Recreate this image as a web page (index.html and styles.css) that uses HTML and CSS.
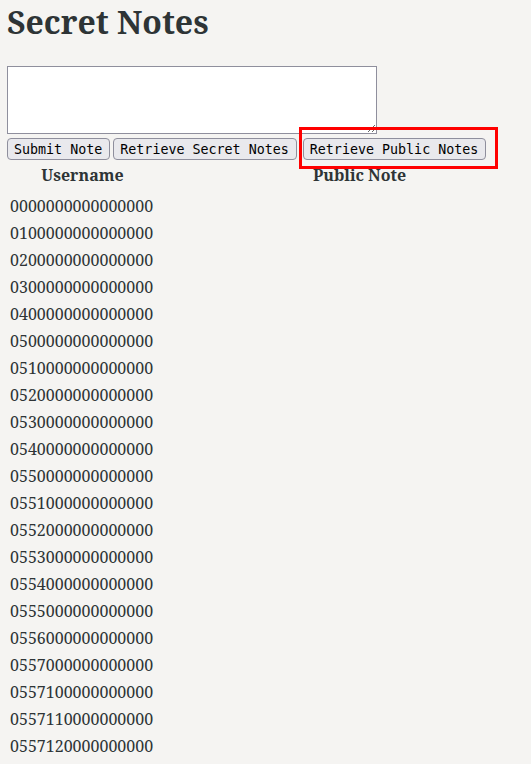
FILE: index.html
```html
<!DOCTYPE html>
<html lang="en">
<head>
<meta charset="utf-8">
<title>Secret Notes</title>
<link rel="stylesheet" href="styles.css">
</head>
<body>
<h1 class="title">Secret Notes</h1>
<textarea class="note-input"></textarea>
<div class="actions">
  <button class="btn">Submit Note</button>
  <button class="btn">Retrieve Secret Notes</button>
  <span class="highlight"><button class="btn">Retrieve Public Notes</button></span>
</div>
<table class="notes">
  <colgroup><col class="col-user"><col class="col-note"></colgroup>
  <thead>
    <tr><th class="user-head">Username</th><th class="note-head">Public Note</th></tr>
  </thead>
  <tbody>
    <tr><td>0000000000000000</td><td></td></tr>
    <tr><td>0100000000000000</td><td></td></tr>
    <tr><td>0200000000000000</td><td></td></tr>
    <tr><td>0300000000000000</td><td></td></tr>
    <tr><td>0400000000000000</td><td></td></tr>
    <tr><td>0500000000000000</td><td></td></tr>
    <tr><td>0510000000000000</td><td></td></tr>
    <tr><td>0520000000000000</td><td></td></tr>
    <tr><td>0530000000000000</td><td></td></tr>
    <tr><td>0540000000000000</td><td></td></tr>
    <tr><td>0550000000000000</td><td></td></tr>
    <tr><td>0551000000000000</td><td></td></tr>
    <tr><td>0552000000000000</td><td></td></tr>
    <tr><td>0553000000000000</td><td></td></tr>
    <tr><td>0554000000000000</td><td></td></tr>
    <tr><td>0555000000000000</td><td></td></tr>
    <tr><td>0556000000000000</td><td></td></tr>
    <tr><td>0557000000000000</td><td></td></tr>
    <tr><td>0557100000000000</td><td></td></tr>
    <tr><td>0557110000000000</td><td></td></tr>
    <tr><td>0557120000000000</td><td></td></tr>
  </tbody>
</table>
</body>
</html>
```
FILE: styles.css
```css
html {
  background: #f5f4f2;
}
body {
  margin: 0;
  padding: 0 7px;
  background: #f5f4f2;
  color: #2e3436;
  font-family: "Noto Serif", "DejaVu Serif", serif;
  font-size: 16px;
}
.title {
  margin: 0;
  font-size: 32px;
  font-weight: 700;
  line-height: 43px;
  margin-bottom: 23px;
}
.note-input {
  display: block;
  box-sizing: border-box;
  width: 370px;
  height: 68px;
  margin: 0;
  background: #fff;
  border: 1px solid #8f8f9d;
  border-radius: 0;
  resize: both;
}
.actions {
  display: flex;
  gap: 3px;
  margin-top: 4px;
  align-items: center;
}
.btn {
  box-sizing: border-box;
  height: 22px;
  padding: 0 7px 0 6px;
  font-family: "DejaVu Sans Mono", monospace;
  font-size: 13.333px;
  color: #000;
  background: #e9e9ed;
  border: 1px solid #8f8f9d;
  border-radius: 4px;
}
.highlight {
  position: relative;
  display: inline-flex;
  margin-left: 3px;
}
.highlight::after {
  content: "";
  position: absolute;
  left: -4px;
  right: -12px;
  top: -11px;
  bottom: -9px;
  border: 3px solid #ff0000;
  pointer-events: none;
}
.notes {
  border-spacing: 2px;
  table-layout: fixed;
  width: 100%;
  margin-top: 1px;
}
.col-user { width: 147px; }
.notes th {
  font-weight: 700;
  padding: 1px 1px 6px;
  line-height: 22px;
}
.notes .user-head { text-align: center; }
.notes .note-head {
  text-align: left;
  padding-left: 155px;
}
.notes td {
  padding: 1px;
  line-height: 23px;
  white-space: nowrap;
}
```
